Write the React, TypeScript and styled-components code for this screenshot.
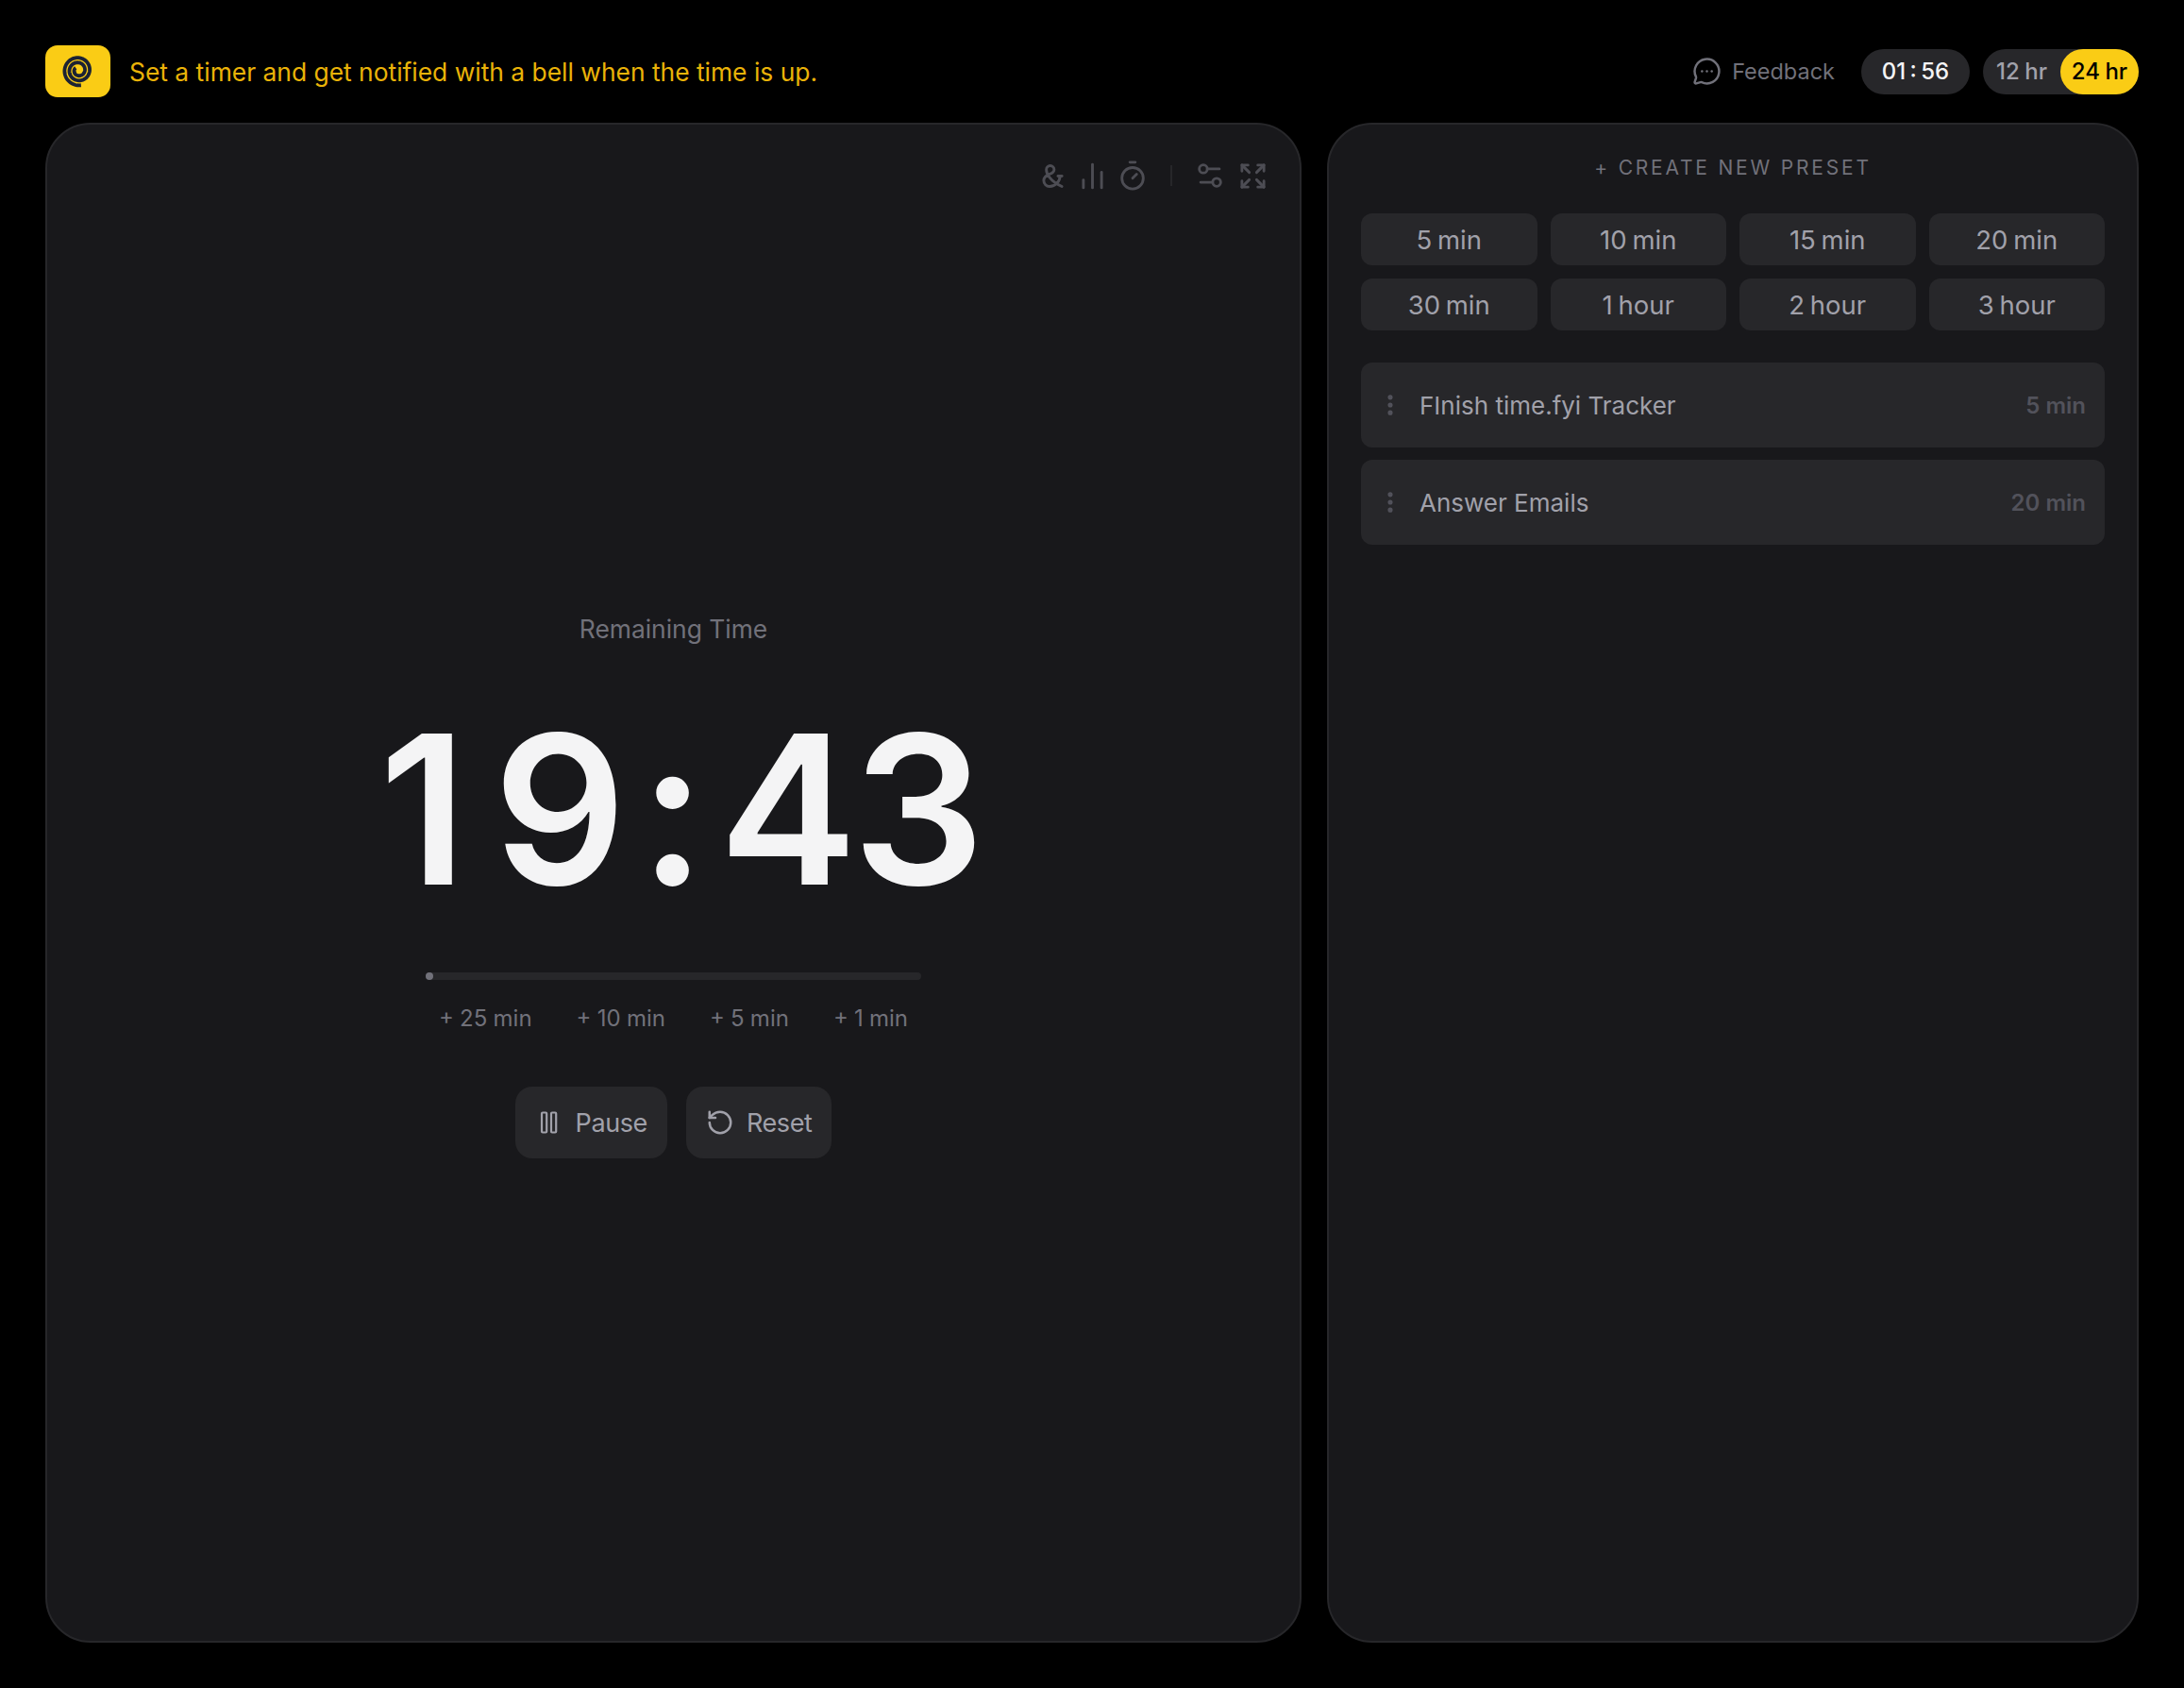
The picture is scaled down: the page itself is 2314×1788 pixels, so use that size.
import React from 'react';
import styled, { createGlobalStyle } from 'styled-components';
import { Ampersand, ChartNoAxesColumn, Timer, Settings2, Expand, RotateCcw, MessageCircleMore, EllipsisVertical } from 'lucide-react';

const Global = createGlobalStyle`
  html, body { margin: 0; padding: 0; background: #000; }
  * { box-sizing: border-box; }
  body { font-family: Inter, "Liberation Sans", sans-serif; }
`;

const Page = styled.div`
  width: 2314px; height: 1788px; padding: 48px 48px 48px; display: flex; flex-direction: column; gap: 27px; background: #000;
`;
const Header = styled.header`
  display: flex; align-items: center; justify-content: space-between; height: 55px;
`;
const Brand = styled.div`display: flex; align-items: center; gap: 20px;`;
const Logo = styled.div`
  width: 69px; height: 55px; border-radius: 13px; background: #facc15; display: flex; align-items: center; justify-content: center;
`;
const Tagline = styled.span`font-size: 26.4px; color: #eab308; line-height: 36px;`;
const HeaderRight = styled.div`display: flex; align-items: center; color: #71717a;`;
const Feedback = styled.div`
  display: flex; align-items: center; gap: 11px; font-size: 23.5px; color: #71717a; margin-right: 28px;
`;
const Pill = styled.div`
  height: 48px; border-radius: 24px; background: #27272a; display: flex; align-items: center; font-size: 24px; font-weight: 500;
`;
const ClockPill = styled(Pill)`width: 115px; justify-content: center; color: #f4f4f5; margin-right: 14px; word-spacing: -2px;`;
const TogglePill = styled(Pill)`width: 165px; word-spacing: -1px;`;
const ToggleOption = styled.span<{ $active?: boolean }>`
  height: 48px; border-radius: 24px; display: flex; align-items: center; justify-content: center;
  width: ${p => (p.$active ? '83px' : '82px')};
  background: ${p => (p.$active ? '#facc15' : 'transparent')};
  color: ${p => (p.$active ? '#000' : '#a1a1aa')};
`;
const Main = styled.main`flex: 1; display: grid; grid-template-columns: 1331px 860px; gap: 27px; min-height: 0;`;
const Panel = styled.section`
  background: #18181b; border: 2px solid #27272a; border-radius: 48px; display: flex; flex-direction: column;
`;
const TimerPanel = styled(Panel)`padding: 37px 34px 0; align-items: center;`;
const Toolbar = styled.div`
  align-self: flex-end; display: flex; align-items: center; height: 34px; color: #4d4d54;
  svg { display: block; }
`;
const ToolGroup = styled.div<{ $gap: number }>`display: flex; align-items: center; gap: ${p => p.$gap}px;`;
const ToolDivider = styled.span`width: 2px; height: 22px; background: #27272a; margin: 0 23px;`;
const Label = styled.div`margin-top: 445px; font-size: 26.4px; line-height: 36px; color: #71717a;`;
const Clock = styled.div`
  margin-top: 63px; padding-left: 18px; font-size: 220px; line-height: 220px; font-weight: 600; color: #f4f4f5; display: flex; align-items: center;
`;
const ClockChar = styled.span<{ $after: number }>`margin-right: ${p => p.$after}px;`;
const Track = styled.div`
  margin-top: 63px; width: 525px; height: 8px; border-radius: 4px; background: #27272a; position: relative;
`;
const Knob = styled.span`position: absolute; left: 0; top: 0; width: 8px; height: 8px; border-radius: 50%; background: #71717a;`;
const Chips = styled.div`margin-top: 26px; display: flex; gap: 47px; font-size: 24px; line-height: 30px; color: #71717a; word-spacing: -0.5px;`;
const Actions = styled.div`margin-top: 57px; display: flex; gap: 20px;`;
const ActionButton = styled.button<{ $gap: number }>`
  height: 76px; padding: 0 21px; border: 0; border-radius: 18px; background: #27272a; color: #a1a1aa; font: inherit; font-size: 27px; letter-spacing: -0.4px;
  display: flex; align-items: center; gap: ${p => p.$gap}px;
`;
const PresetPanel = styled(Panel)`padding: 34px 34px 0;`;
const PresetTitle = styled.div`
  text-align: center; font-size: 21px; line-height: 24px; letter-spacing: 2.8px; color: #71717a; margin-bottom: 36px;
`;
const PresetGrid = styled.div`display: grid; grid-template-columns: repeat(4, 1fr); gap: 14px; margin-bottom: 34px;`;
const PresetButton = styled.button`
  height: 55px; border: 0; border-radius: 12px; background: #27272a; color: #a1a1aa; font: inherit; font-size: 27.5px; word-spacing: -2px;
  display: flex; align-items: center; justify-content: center;
`;
const TaskList = styled.div`display: flex; flex-direction: column; gap: 13px;`;
const TaskRow = styled.div`
  height: 90px; border-radius: 12px; background: #27272a; display: flex; align-items: center; padding: 0 20px 0 17px;
`;
const Grip = styled.span`color: #52525b; display: flex; width: 28px; margin-right: 17px;`;
const TaskName = styled.span`flex: 1; font-size: 26px; color: #a1a1aa;`;
const TaskTime = styled.span`font-size: 24px; font-weight: 600; color: #52525b;`;

// Spiral mark: radius shrinks steadily as the stroke winds clockwise from the bottom.
const spiralPath = (() => {
  const cx = 18, cy = 17.5, turns = 2.4, r0 = 16, r1 = 3.8;
  const pts: string[] = [];
  const steps = 180;
  for (let i = 0; i <= steps; i++) {
    const t = i / steps;
    const a = Math.PI / 2 - 0.18 + t * turns * 2 * Math.PI;
    const r = r0 + (r1 - r0) * t;
    pts.push(`${(cx + r * Math.cos(a)).toFixed(2)} ${(cy + r * Math.sin(a)).toFixed(2)}`);
  }
  return 'M' + pts.join('L');
})();

const LogoMark = () => (
  <svg width="36" height="38" viewBox="0 0 36 38" fill="none" stroke="#1c2233" strokeWidth="3.8">
    <path d={spiralPath} />
  </svg>
);

const PauseIcon = () => (
  <svg width="29" height="28" viewBox="0 0 29 28" fill="none" stroke="currentColor" strokeWidth="2.2">
    <rect x="7" y="3.5" width="5.2" height="21" rx="1" />
    <rect x="17" y="3.5" width="5.2" height="21" rx="1" />
  </svg>
);

const presets = ['5 min', '10 min', '15 min', '20 min', '30 min', '1 hour', '2 hour', '3 hour'];
const tasks = [
  { name: 'FInish time.fyi Tracker', time: '5 min' },
  { name: 'Answer Emails', time: '20 min' },
];
const increments = ['+ 25 min', '+ 10 min', '+ 5 min', '+ 1 min'];
const clockChars = [
  { ch: '1', after: 28 },
  { ch: '9', after: 14 },
  { ch: ':', after: 14 },
  { ch: '4', after: -5 },
  { ch: '3', after: 0 },
];

export default function App() {
  return (
    <Page>
      <Global />
      <Header>
        <Brand>
          <Logo><LogoMark /></Logo>
          <Tagline>Set a timer and get notified with a bell when the time is up.</Tagline>
        </Brand>
        <HeaderRight>
          <Feedback><MessageCircleMore size={31} strokeWidth={1.9} />Feedback</Feedback>
          <ClockPill>01 : 56</ClockPill>
          <TogglePill>
            <ToggleOption>12 hr</ToggleOption>
            <ToggleOption $active>24 hr</ToggleOption>
          </TogglePill>
        </HeaderRight>
      </Header>
      <Main>
        <TimerPanel>
          <Toolbar>
            <ToolGroup $gap={9}>
              <Ampersand size={33} strokeWidth={2.1} />
              <ChartNoAxesColumn size={33} strokeWidth={2.1} />
              <Timer size={34} strokeWidth={2} />
            </ToolGroup>
            <ToolDivider />
            <ToolGroup $gap={13}>
              <Settings2 size={34} strokeWidth={2} />
              <Expand size={31} strokeWidth={2.2} />
            </ToolGroup>
          </Toolbar>
          <Label>Remaining Time</Label>
          <Clock>{clockChars.map(c => <ClockChar key={c.ch} $after={c.after}>{c.ch}</ClockChar>)}</Clock>
          <Track><Knob /></Track>
          <Chips>{increments.map(i => <span key={i}>{i}</span>)}</Chips>
          <Actions>
            <ActionButton $gap={14}><PauseIcon />Pause</ActionButton>
            <ActionButton $gap={13}><RotateCcw size={30} strokeWidth={2} />Reset</ActionButton>
          </Actions>
        </TimerPanel>
        <PresetPanel>
          <PresetTitle>+ CREATE NEW PRESET</PresetTitle>
          <PresetGrid>{presets.map(p => <PresetButton key={p}>{p}</PresetButton>)}</PresetGrid>
          <TaskList>
            {tasks.map(t => (
              <TaskRow key={t.name}>
                <Grip><EllipsisVertical size={28} strokeWidth={2.4} /></Grip>
                <TaskName>{t.name}</TaskName>
                <TaskTime>{t.time}</TaskTime>
              </TaskRow>
            ))}
          </TaskList>
        </PresetPanel>
      </Main>
    </Page>
  );
}
